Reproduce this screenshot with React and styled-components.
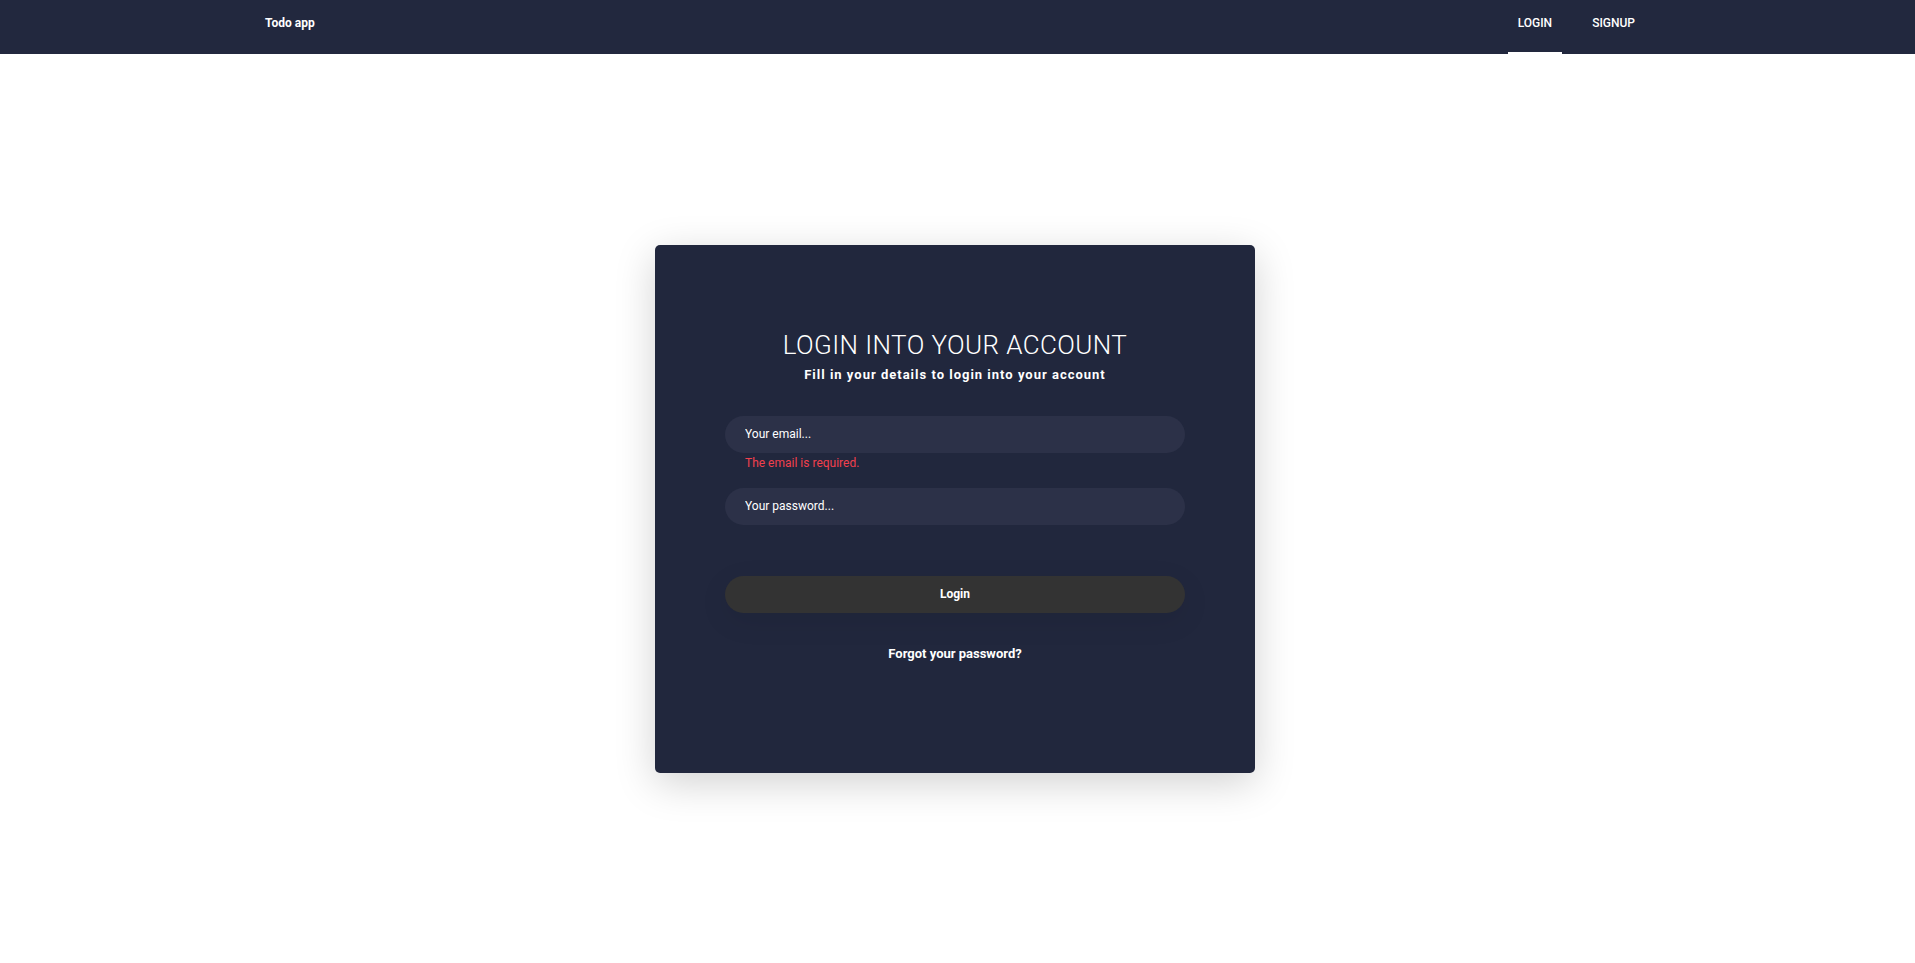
import React from "react";
import styled, { createGlobalStyle } from "styled-components";

const GlobalStyle = createGlobalStyle`
  * {
    box-sizing: border-box;
  }
  body {
    margin: 0;
    background: #ffffff;
    font-family: Roboto, "Liberation Sans", sans-serif;
  }
`;

const navLinks = [
  { display: "LOGIN", active: true },
  { display: "SIGNUP", active: false },
];

const Header = styled.header`
  height: 54px;
  background: #22283e;
`;

const HeaderInner = styled.div`
  width: 1380px;
  height: 100%;
  margin-left: 265px;
  display: flex;
  align-items: center;
  justify-content: space-between;
`;

const Logo = styled.a`
  color: #ffffff;
  font-size: 12px;
  font-weight: 700;
  text-decoration: none;
  margin-top: -8px;
`;

const Nav = styled.nav`
  display: flex;
  height: 100%;
  gap: 20px;
`;

const NavItem = styled.a`
  position: relative;
  display: flex;
  align-items: flex-start;
  padding: 16px 10px 0;
  color: #ffffff;
  font-size: 12px;
  font-weight: 500;
  text-decoration: none;

  &::after {
    content: "";
    position: absolute;
    left: 0;
    right: 0;
    bottom: 0;
    height: 2px;
    background: ${(p) => (p.$active ? "#ffffff" : "transparent")};
  }
`;

const Main = styled.main`
  min-height: calc(100vh - 54px);
  display: flex;
  align-items: center;
  justify-content: center;
  padding-right: 5px;
`;

const Card = styled.div`
  width: 600px;
  height: 528px;
  background: #21273d;
  border-radius: 5px;
  padding: 84px 70px 0;
  box-shadow: 0 10px 40px rgba(0, 0, 0, 0.18);
  display: flex;
  flex-direction: column;
  align-items: center;
`;

const Title = styled.h1`
  margin: 0;
  color: #ffffff;
  font-size: 26px;
  font-weight: 300;
  letter-spacing: 0.4px;
  line-height: 32px;
`;

const Subtitle = styled.p`
  margin: 6px 0 33px;
  color: #ffffff;
  font-size: 13px;
  font-weight: 700;
  letter-spacing: 1px;
  line-height: 16px;
`;

const Form = styled.form`
  width: 100%;
  display: flex;
  flex-direction: column;
`;

const Input = styled.input`
  width: 100%;
  height: 37px;
  border: none;
  outline: none;
  border-radius: 20px;
  background: #2c3148;
  padding: 0 20px;
  color: #ffffff;
  font-family: Roboto, "Liberation Sans", sans-serif;
  font-size: 12px;

  &::placeholder {
    color: #ffffff;
    opacity: 1;
  }
`;

const Error = styled.span`
  display: block;
  padding: 3px 20px 0;
  height: 35px;
  color: #f2404d;
  font-size: 12px;
  line-height: 14px;
`;

const Button = styled.button`
  margin-top: 51px;
  width: 100%;
  height: 37px;
  border: none;
  border-radius: 20px;
  background: #333333;
  color: #ffffff;
  font-family: Roboto, "Liberation Sans", sans-serif;
  font-size: 12px;
  font-weight: 700;
  cursor: pointer;
  box-shadow: 0 8px 30px rgba(0, 0, 0, 0.08);
`;

const Forgot = styled.a`
  margin-top: 33px;
  align-self: center;
  color: #ffffff;
  font-size: 13px;
  font-weight: 700;
  line-height: 15px;
  text-decoration: none;
`;

const App = () => {
  return (
    <>
      <GlobalStyle />
      <Header>
        <HeaderInner>
          <Logo href="#">Todo app</Logo>
          <Nav>
            {navLinks.map((item, index) => (
              <NavItem key={index} href="#" $active={item.active}>
                {item.display}
              </NavItem>
            ))}
          </Nav>
        </HeaderInner>
      </Header>
      <Main>
        <Card>
          <Title>LOGIN INTO YOUR ACCOUNT</Title>
          <Subtitle>Fill in your details to login into your account</Subtitle>
          <Form onSubmit={(e) => e.preventDefault()}>
            <Input type="email" placeholder="Your email..." />
            <Error>The email is required.</Error>
            <Input type="password" placeholder="Your password..." />
            <Button type="submit">Login</Button>
            <Forgot href="#">Forgot your password?</Forgot>
          </Form>
        </Card>
      </Main>
    </>
  );
};

export default App;
